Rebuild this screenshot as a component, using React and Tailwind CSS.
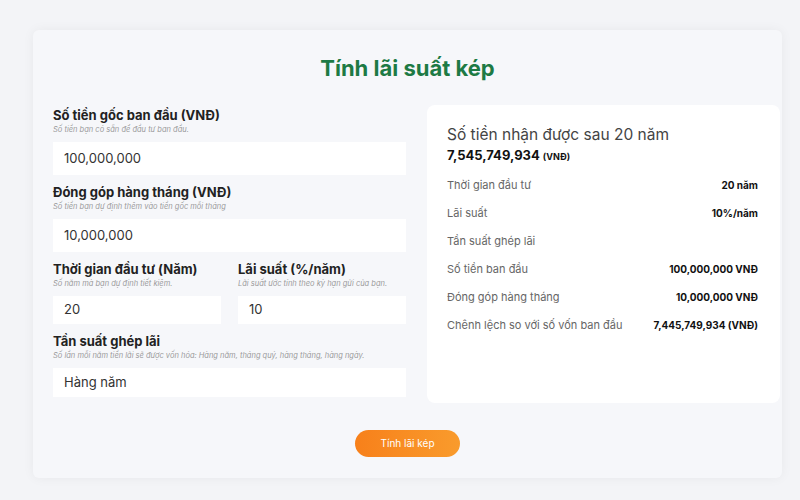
const fields = [
  { label: 'Thời gian đầu tư', value: '20 năm' },
  { label: 'Lãi suất', value: '10%/năm' },
  { label: 'Tần suất ghép lãi', value: '' },
  { label: 'Số tiền ban đầu', value: '100,000,000 VNĐ' },
  { label: 'Đóng góp hàng tháng', value: '10,000,000 VNĐ' },
  { label: 'Chênh lệch so với số vốn ban đầu', value: '7,445,749,934 (VNĐ)' },
];

const Field = ({ label, hint, value, h = 'h-[33px]', className = '' }) => (
  <div className={className}>
    <div className="text-[13px] font-bold leading-[16px] text-[#222]">{label}</div>
    <div className="mt-[2px] text-[7.5px] italic leading-[10px] text-[#9a9a9a]">{hint}</div>
    <div className={`mt-[7px] flex items-center bg-white px-[11px] text-[13px] text-[#333] ${h}`}>
      {value}
    </div>
  </div>
);

const App = () => {
  return (
    <div
      className="h-[500px] w-[800px] overflow-hidden bg-[#f3f4f7]"
      style={{ fontFamily: 'Inter, "Noto Sans", sans-serif' }}
    >
      <div className="pl-[33px] pr-[18px] pt-[30px]">
        <div className="h-[448px] rounded-[6px] bg-[#f6f7fa] shadow-[0_0_12px_rgba(0,0,0,0.05)]">
          <h1 className="pt-[23px] text-center text-[22px] font-bold leading-[30px] text-[#1d7a44]">
            Tính lãi suất kép
          </h1>

          <div className="mt-[22px] flex gap-[21px] pl-[20px] pr-[2px]">
            <div className="flex w-[353px] flex-col gap-[9px] pt-[2px]">
              <Field
                label="Số tiền gốc ban đầu (VNĐ)"
                hint="Số tiền bạn có sẵn để đầu tư ban đầu."
                value="100,000,000"
              />
              <Field
                label="Đóng góp hàng tháng (VNĐ)"
                hint="Số tiền bạn dự định thêm vào tiền gốc mỗi tháng"
                value="10,000,000"
              />
              <div className="flex gap-[17px]">
                <Field
                  className="w-[168px]"
                  h="h-[28px]"
                  label="Thời gian đầu tư (Năm)"
                  hint="Số năm mà bạn dự định tiết kiệm."
                  value="20"
                />
                <Field
                  className="flex-1"
                  h="h-[28px]"
                  label="Lãi suất (%/năm)"
                  hint="Lãi suất ước tính theo kỳ hạn gửi của bạn."
                  value="10"
                />
              </div>
              <Field
                h="h-[29px]"
                label="Tần suất ghép lãi"
                hint="Số lần mỗi năm tiền lãi sẽ được vốn hóa: Hàng năm, tháng quý, hàng tháng, hàng ngày."
                value="Hàng năm"
              />
            </div>

            <div className="h-[298px] w-[353px] rounded-[8px] bg-white pl-[20px] pr-[22px] pt-[20px]">
              <div className="text-[15.5px] leading-[20px] text-[#444]">Số tiền nhận được sau 20 năm</div>
              <div className="mt-[1px] text-[13px] font-bold leading-[18px] text-[#111]">
                7,545,749,934 <span className="text-[9px]">(VNĐ)</span>
              </div>
              <div className="mt-[5px] flex flex-col">
                {fields.map((f) => (
                  <div key={f.label} className="flex h-[28px] items-center justify-between">
                    <span className="text-[11px] text-[#666]">{f.label}</span>
                    <span className="text-[10px] font-bold text-[#111]">{f.value}</span>
                  </div>
                ))}
              </div>
            </div>
          </div>

          <div className="mt-[27px] flex justify-center">
            <button className="h-[27px] w-[105px] rounded-full bg-gradient-to-r from-[#f7801a] to-[#f99b2c] text-[10px] text-white">
              Tính lãi kép
            </button>
          </div>
        </div>
      </div>
    </div>
  );
};

export default App;
